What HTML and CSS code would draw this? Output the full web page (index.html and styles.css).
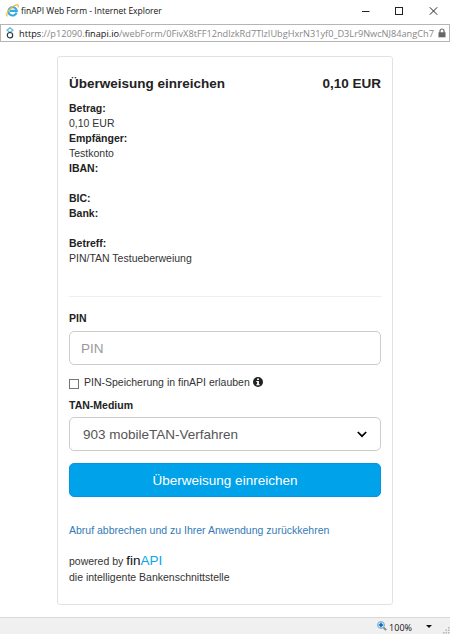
FILE: index.html
```html
<!DOCTYPE html>
<html lang="de">
<head>
  <meta charset="UTF-8">
  <meta name="viewport" content="width=device-width, initial-scale=1.0">
  <title>finAPI Web Form</title>
  <link rel="stylesheet" href="styles.css">
</head>
<body>
  <header class="titlebar">
    <svg class="ie-icon" width="13" height="13" viewBox="0 0 13 13" fill="none">
      <path d="M10.6 8.7A4.2 4.2 0 1 1 10.8 6.9H4" stroke="#35a9e1" stroke-width="2.1"/>
      <path d="M1.6 12.2C-.6 11.3 1.6 6.9 5 4 8.3 1 12 .1 12.3 1.6c.1.6-.1 1.2-.4 1.8" stroke="#f0b93a" stroke-width="1.2"/>
    </svg>
    <span class="window-title">finAPI Web Form - Internet Explorer</span>
    <svg class="window-buttons" width="77" height="10" viewBox="0 0 77 10" fill="none" stroke="#222">
      <path d="M1 5.5h7.5"/>
      <rect x="34.5" y="1.5" width="7" height="7"/>
      <path d="M68.8 1.3l7.4 7.4M76.2 1.3l-7.4 7.4"/>
    </svg>
  </header>

  <div class="addressbar">
    <svg class="site-icon" width="8" height="12" viewBox="0 0 8 12" fill="none" stroke-width="1.2">
      <path d="M1.5 4.2L1 3.2 4 .8l3 2.4-.5 1" stroke="#62b5dc"/>
      <path d="M2 3.8l2 1.8 2-1.8" stroke="#62b5dc"/>
      <circle cx="4" cy="8.2" r="2.7" stroke="#27384a"/>
    </svg>
    <span class="url"><span class="url-dark">https</span>://p12090.<span class="url-dark">finapi.io</span>/webForm/0FivX8tFF12ndlzkRd7TlzIUbgHxrN31yf0_D3Lr9NwcNJ84angCh7</span>
    <svg class="lock" width="8" height="10" viewBox="0 0 8 10">
      <path d="M2 5V3a2 2 0 0 1 4 0v2" fill="none" stroke="#666" stroke-width="1.2"/>
      <rect x=".5" y="4.3" width="7" height="5" fill="#666"/>
    </svg>
  </div>

  <main class="card">
    <div class="heading">
      <h1>Überweisung einreichen</h1>
      <span class="amount">0,10 EUR</span>
    </div>

    <dl class="details">
      <dt>Betrag:</dt>
      <dd>0,10 EUR</dd>
      <dt>Empfänger:</dt>
      <dd>Testkonto</dd>
      <dt>IBAN:</dt>
      <dd></dd>
      <dt>BIC:</dt>
      <dt>Bank:</dt>
      <dd></dd>
      <dt>Betreff:</dt>
      <dd>PIN/TAN Testueberweiung</dd>
    </dl>

    <form class="form">
      <label class="label" for="pin">PIN</label>
      <input class="control" type="password" id="pin" placeholder="PIN">

      <div class="save-pin">
        <input class="checkbox" type="checkbox" id="save">
        <label for="save">PIN-Speicherung in finAPI erlauben</label>
        <svg class="info" width="10" height="10" viewBox="0 0 10 10">
          <circle cx="5" cy="5" r="5" fill="#222"/>
          <path d="M4.1 1.5h1.8v1.5H4.1zM3.3 4h2.6v3.2h.8v1.1H3.3V7.2h.8V5.1h-.8z" fill="#fff"/>
        </svg>
      </div>

      <label class="label label-tan" for="tan">TAN-Medium</label>
      <div class="select-wrap">
        <select class="control select" id="tan">
          <option>903 mobileTAN-Verfahren</option>
        </select>
        <svg class="chevron" width="10" height="7" viewBox="0 0 10 7" fill="none">
          <path d="M.8 1L5 5.2 9.2 1" stroke="#000" stroke-width="1.7"/>
        </svg>
      </div>

      <button class="submit" type="button">Überweisung einreichen</button>
    </form>

    <a class="cancel" href="#">Abruf abbrechen und zu Ihrer Anwendung zurückkehren</a>

    <div class="powered">
      <div class="powered-line">powered by <span class="logo">fin<span class="logo-api">API</span></span></div>
      <div class="slogan">die intelligente Bankenschnittstelle</div>
    </div>
  </main>

  <footer class="statusbar">
    <svg class="zoom-icon" width="10" height="10" viewBox="0 0 10 10" fill="none">
      <path d="M6.3 6.3L9.2 9.2" stroke="#927f73" stroke-width="1.8"/>
      <circle cx="4" cy="4" r="3.4" fill="#d4edfc" stroke="#69a9d3"/>
      <path d="M4 1.8v4.4M1.8 4h4.4" stroke="#1261b5" stroke-width="1.5"/>
    </svg>
    <span class="zoom-value">100%</span>
    <svg class="caret" width="6" height="3" viewBox="0 0 6 3"><path d="M0 0h6L3 3z" fill="#111"/></svg>
    <svg class="grip" width="7" height="7" viewBox="0 0 7 7" fill="#b5b5b5">
      <path d="M5 0h1.5v1.5H5zM2.5 2.5H4V4H2.5zM5 2.5h1.5V4H5zM0 5h1.5v1.5H0zM2.5 5H4v1.5H2.5zM5 5h1.5v1.5H5z"/>
    </svg>
  </footer>
</body>
</html>
```

FILE: styles.css
```css
* {
  box-sizing: border-box;
}
body {
  margin: 0;
  height: 634px;
  display: flex;
  flex-direction: column;
  overflow: hidden;
  background-color: #fff;
  color: #333;
  font-family: "Liberation Sans", Arial, sans-serif;
  font-size: 10.5px;
  line-height: 15px;
}
svg {
  display: block;
  flex: none;
}

/* window frame */
.titlebar {
  height: 24px;
  padding: 0 12px 3px 6px;
  display: flex;
  align-items: center;
  font-family: "Open Sans", "Noto Sans", sans-serif;
  font-size: 8.5px;
  color: #111;
}
.window-title {
  margin-left: 2px;
  white-space: nowrap;
}
.window-buttons {
  margin-left: auto;
}
.addressbar {
  height: 18px;
  padding: 0 3px 0 5px;
  display: flex;
  align-items: center;
  border: 1px solid #b5b5b5;
  font-family: "Open Sans", "Noto Sans", sans-serif;
  font-size: 9.2px;
  color: #888;
}
.url {
  margin-left: 5px;
  white-space: nowrap;
}
.url-dark {
  color: #111;
}
.lock {
  margin-left: auto;
}

/* card */
.card {
  width: 336px;
  height: 549px;
  margin: 14px 0 0 57px;
  padding: 17px 11px 0;
  border: 1px solid #e2e2e2;
  border-radius: 3px;
}
.heading {
  height: 20px;
  display: flex;
  justify-content: space-between;
  line-height: 20px;
  font-size: 13.5px;
  font-weight: bold;
  color: #222;
}
h1 {
  margin: 0;
  font-size: inherit;
}
.details {
  height: 196px;
  margin: 7px 0 0;
  border-bottom: 1px solid #eee;
}
.details dt {
  font-weight: bold;
  color: #222;
}
.details dd {
  height: 15px;
  margin: 0;
}
.form {
  display: flex;
  flex-direction: column;
}
.label {
  height: 15px;
  margin-top: 14px;
  font-weight: bold;
  color: #222;
}
.control {
  display: block;
  width: 100%;
  height: 34px;
  margin-top: 5px;
  padding: 0 11px;
  border: 1px solid #ccc;
  border-radius: 5px;
  background-color: #fff;
  color: #555;
  font-family: inherit;
  font-size: 13.5px;
}
.control::placeholder {
  color: #999;
  opacity: 1;
}
.save-pin {
  height: 15px;
  margin-top: 10px;
  display: flex;
  align-items: center;
}
.checkbox {
  width: 10px;
  height: 10px;
  margin: 3px 5px 0 0;
  appearance: none;
  border: 1px solid #777;
}
.info {
  margin: -2px 0 0 3px;
}
.label-tan {
  margin-top: 8px;
}
.select-wrap {
  display: grid;
  align-items: center;
}
.select-wrap > * {
  grid-area: 1 / 1;
}
.select {
  appearance: none;
  margin-top: 4px;
  padding-left: 13px;
}
.chevron {
  justify-self: end;
  margin: 4px 14px 0 0;
}
.submit {
  height: 34px;
  margin-top: 12px;
  padding: 0;
  border: 1px solid #0097e6;
  border-radius: 5px;
  background-color: #00a2e9;
  color: #fff;
  font-family: inherit;
  font-size: 13.5px;
}
.cancel {
  display: block;
  margin-top: 26px;
  color: #337ab7;
  text-decoration: none;
  white-space: nowrap;
}
.powered {
  margin-top: 14px;
}
.powered-line {
  height: 18px;
  line-height: 17px;
}
.logo {
  font-size: 13.5px;
  color: #111;
}
.logo-api {
  color: #0aa5ea;
}

/* status bar */
.statusbar {
  height: 17px;
  margin-top: auto;
  display: flex;
  align-items: center;
  justify-content: flex-end;
  border-top: 1px solid #d9d9d9;
  background-color: #f0f0f0;
  font-family: "Open Sans", "Noto Sans", sans-serif;
  font-size: 9px;
  color: #111;
}
.zoom-value {
  margin: 2px 14px 0 2px;
}
.grip {
  margin: 8px 0 0 11px;
}
```
